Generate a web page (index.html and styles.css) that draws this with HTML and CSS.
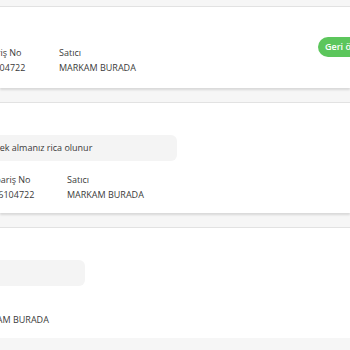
FILE: index.html
```html
<!DOCTYPE html>
<html lang="tr">

<head>
    <meta charset="UTF-8">
    <meta name="viewport" content="width=device-width, initial-scale=1.0">
    <title>Siparişlerim</title>
    <link rel="stylesheet" href="styles.css">
</head>

<body>
    <div class="order-list">
        <div class="order-card order-card--first">
            <div class="order-body">
                <div class="order-info">
                    <div class="info-col">
                        <span class="info-label">Sipariş No</span>
                        <span class="info-value">361004722</span>
                    </div>
                    <div class="info-col">
                        <span class="info-label">Satıcı</span>
                        <span class="info-value">MARKAM BURADA</span>
                    </div>
                </div>
            </div>
            <span class="status-pill">Geri ödendi</span>
        </div>

        <div class="order-card order-card--second">
            <div class="order-body">
                <div class="order-note">Kargoyu kontrol ederek almanız rica olunur</div>
                <div class="order-info">
                    <div class="info-col">
                        <span class="info-label">Sipariş No</span>
                        <span class="info-value">396104722</span>
                    </div>
                    <div class="info-col">
                        <span class="info-label">Satıcı</span>
                        <span class="info-value">MARKAM BURADA</span>
                    </div>
                </div>
            </div>
        </div>

        <div class="order-card order-card--third">
            <div class="order-body">
                <div class="order-note">Kargoyu kontrol ederek almanız rica olunur</div>
                <div class="order-info">
                    <div class="info-col">
                        <span class="info-label">Sipariş No</span>
                        <span class="info-value">396104722</span>
                    </div>
                    <div class="info-col">
                        <span class="info-label">Satıcı</span>
                        <span class="info-value">MARKAM BURADA</span>
                    </div>
                </div>
            </div>
        </div>
    </div>
</body>

</html>
```

FILE: styles.css
```css
:root {
    --page-bg: #f6f6f6;
    --card-bg: #fff;
    --line-color: #e2e2e2;
    --text-color: #3a3a3a;
    --note-bg: #f4f4f4;
    --green: #5cc65c;
}

* {
    margin: 0;
    padding: 0;
    box-sizing: border-box;
}

body {
    background-color: var(--page-bg);
    color: var(--text-color);
    font-family: 'Open Sans', 'Noto Sans', sans-serif;
    font-size: 9px;
    overflow: hidden;
}

.order-list {
    padding-top: 6px;
    display: flex;
    flex-direction: column;
    gap: 14px;
}

.order-card {
    position: relative;
    background-color: var(--card-bg);
    border-top: 1px solid var(--line-color);
    box-shadow: 0 2px 2px rgba(0, 0, 0, 0.12);
    overflow: hidden;
    padding: 32px 0 13px 0;
}

.order-card--first {
    padding-top: 40px;
    padding-bottom: 15px;
}

.order-body {
    display: flex;
    flex-direction: column;
    gap: 13px;
}

.order-card--first .order-body {
    margin-left: -21px;
}

.order-card--second .order-body {
    margin-left: -12px;
}

.order-card--third .order-body {
    margin-left: -108px;
}

.order-note {
    align-self: flex-start;
    background-color: var(--note-bg);
    border-radius: 6px;
    padding: 7px 85px 7px 10px;
    margin-left: -87px;
    line-height: 12px;
    white-space: nowrap;
}

.order-card--third .order-note {
    padding-right: 89px;
}

.order-info {
    display: flex;
}

.info-col {
    display: flex;
    flex-direction: column;
    gap: 4px;
    width: 80px;
    white-space: nowrap;
    line-height: 11px;
}

.order-card--second .info-col {
    width: 79px;
}

.status-pill {
    position: absolute;
    top: 30px;
    left: 318px;
    background-color: var(--green);
    color: #fff;
    font-weight: 600;
    font-size: 9px;
    line-height: 20px;
    padding: 0 7px;
    border-radius: 10px;
    white-space: nowrap;
}
```
